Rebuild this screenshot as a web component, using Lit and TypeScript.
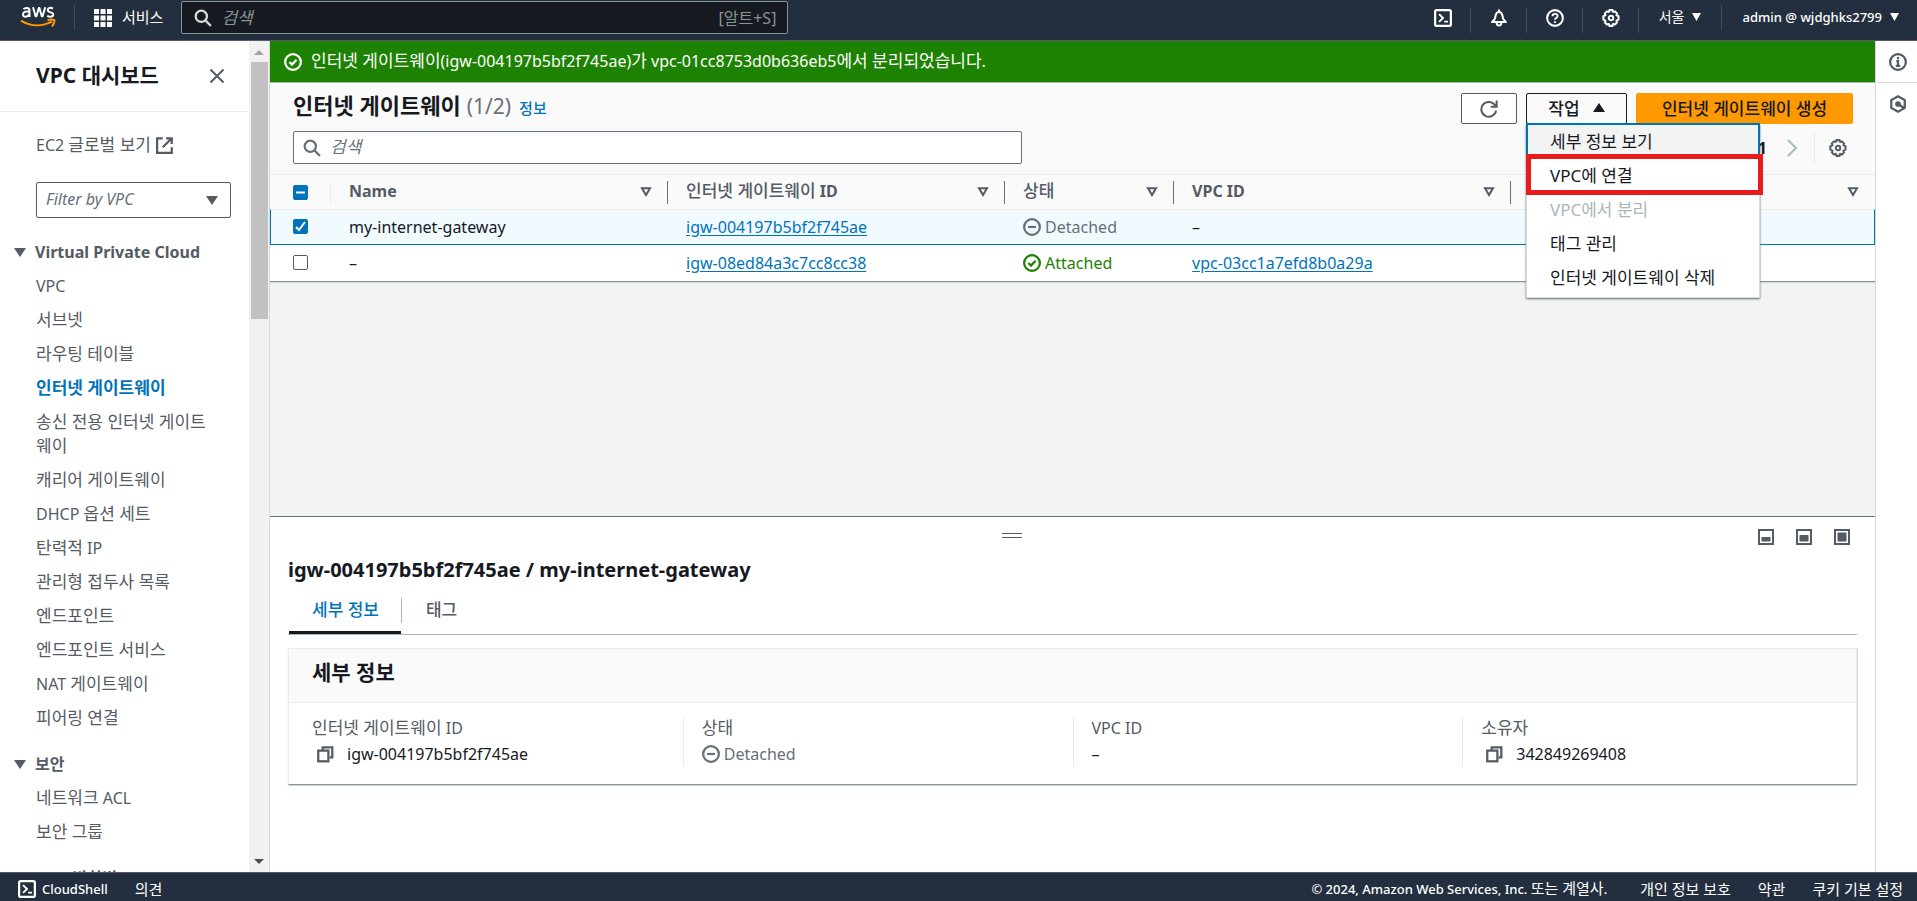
import { LitElement, html, svg, css } from "lit";
import { customElement, property } from "lit/decorators.js";
import { classMap } from "lit/directives/class-map.js";

const stroked = (body: unknown, size = 18) =>
  html`<svg width=${size} height=${size} viewBox="0 0 16 16" fill="none" stroke="currentColor" stroke-width="2" aria-hidden="true">${body}</svg>`;

// Wraps each run of Hangul so that it can be sized apart from Latin text.
const mixed = (text: string) =>
  text.split(/([가-힣]+(?: [가-힣]+)*)/).filter(Boolean).map((t) => (/[가-힣]/.test(t) ? html`<span class="ko">${t}</span>` : t));

const icons: Record<string, unknown> = {
  search: stroked(svg`<circle cx="6.5" cy="6.5" r="5"/><path d="M10.2 10.2 15 15"/>`),
  services: html`<svg width="18" height="18" viewBox="0 0 18 18" fill="currentColor" aria-hidden="true">
    <path d="M0 0h5v5H0zM6.500 0h5v5h-5zM13 0h5v5h-5zM0 6.500h5v5H0zM6.500 6.500h5v5h-5zM13 6.500h5v5h-5zM0 13h5v5H0zM6.500 13h5v5h-5zM13 13h5v5h-5z"/></svg>`,
  shell: stroked(svg`<rect x="1" y="1" width="14" height="14" rx="1.500"/><path d="m4.500 4.500 3.500 3.500-3.500 3.500M9 11.200h3.500" stroke-width="1.700"/>`),
  bell: stroked(svg`<path d="M8 .5V2.500M1.800 11.600h12.400l-2.500-2.800-.8-3.500C10.500 3.700 9.600 2.600 8 2.600S5.500 3.700 5.100 5.300l-.8 3.500z" stroke-linejoin="round" stroke-width="1.800"/><path d="M6 12.500c0 3 4 3 4 0" stroke-width="1.800"/>`),
  help: stroked(svg`<circle cx="8" cy="8" r="7" stroke-width="1.800"/><path d="M5.800 6.400C5.800 3.600 10.300 3.700 10.300 6.300 10.300 7.900 8 7.900 8 9.600M8 10.900v1.500" stroke-width="1.700"/>`),
  gear: stroked(svg`<path d="M6.600 1h2.800l.5 1.600 1.600-.5 1.900 1.900-.6 1.600 1.900.7v3.200l-1.900.8.6 1.600-1.900 1.900-1.600-.6L9.400 15H6.600l-.6-1.800-1.600.6-1.900-1.900.6-1.600-1.900-.8V6.300l1.900-.7-.6-1.600 1.900-1.900 1.600.5z" stroke-width="1.800" stroke-linejoin="round"/><circle cx="8" cy="8" r="2" stroke-width="1.800"/>`),
  close: stroked(svg`<path d="m1.500 1.500 13 13m0-13-13 13"/>`, 16),
  external: stroked(svg`<path d="M6 2H1v13h13v-5"/><path d="M9 2h5v5M14 2 6 10"/>`),
  check: stroked(svg`<circle cx="8" cy="8" r="7"/><path d="m4.800 8 2.300 2.300L11.200 6"/>`),
  minus: stroked(svg`<circle cx="8" cy="8" r="7"/><path d="M4.500 8h7"/>`),
  info: stroked(svg`<circle cx="8" cy="8" r="7"/><path d="M8 3.500v2M6.500 7.300H8v4M6 11.500h4"/>`),
  hex: stroked(svg`<path d="m8 1.200 6 3.300v7l-6 3.300-6-3.300v-7z"/><circle cx="8" cy="8" r="2" fill="currentColor" stroke-width="1"/><path d="m8 8 6 4"/>`),
  refresh: stroked(svg`<path d="M14.300 9.500A6.600 6.600 0 1 1 13 4.200l1.500 1.300M14.800 .500v5.500H9.500" stroke-width="1.800"/>`),
  copy: stroked(svg`<rect x="2" y="5" width="9" height="9.500"/><path d="M6 4.500V2h8.500v9H12"/>`),
  next: html`<svg width="12" height="18" viewBox="0 0 12 18" fill="none" stroke="currentColor" stroke-width="2" aria-hidden="true"><path d="m2 1 8 8-8 8"/></svg>`,
  filter: html`<svg width="12" height="10" viewBox="0 0 12 10" fill="none" stroke="currentColor" stroke-width="2" aria-hidden="true"><path d="M2 1.200h8L6 8z"/></svg>`,
  up: html`<svg width="12" height="9" viewBox="0 0 12 9" fill="currentColor" aria-hidden="true"><path d="M6 0l6 9H0z"/></svg>`,
  down: html`<svg width="12" height="9" viewBox="0 0 12 9" fill="currentColor" aria-hidden="true"><path d="M0 0h12L6 9z"/></svg>`,
  caret: html`<svg width="9" height="8" viewBox="0 0 9 8" fill="currentColor" aria-hidden="true"><path d="M0 0h9L4.500 8z"/></svg>`,
  grip: html`<svg width="20" height="6" viewBox="0 0 20 6" fill="currentColor" aria-hidden="true"><path d="M0 0h20v1H0zM0 4h20v1H0z"/></svg>`,
  panelSmall: html`<svg width="16" height="16" viewBox="0 0 16 16" aria-hidden="true"><path d="M1 1h14v14H1z" fill="none" stroke="currentColor" stroke-width="2"/><path d="M3.500 8h9v4.500h-9z" fill="currentColor"/></svg>`,
  panelMedium: html`<svg width="16" height="16" viewBox="0 0 16 16" aria-hidden="true"><path d="M1 1h14v14H1z" fill="none" stroke="currentColor" stroke-width="2"/><path d="M3.500 6h9v6.500h-9z" fill="currentColor"/></svg>`,
  panelLarge: html`<svg width="16" height="16" viewBox="0 0 16 16" aria-hidden="true"><path d="M1 1h14v14H1z" fill="none" stroke="currentColor" stroke-width="2"/><path d="M3.500 3.500h9v9h-9z" fill="currentColor"/></svg>`,
};

const base = css`
  * { box-sizing: border-box; }
  svg { display: block; flex: none; }
  a { color: inherit; text-decoration: none; }
  button, input, select { font: inherit; color: inherit; margin: 0; }
  button { background: none; border: 0; padding: 0; display: flex; align-items: center; cursor: pointer; white-space: nowrap; }
  h1, h2, h3, ul, dl, dd, dt { margin: 0; padding: 0; }
  ul { list-style: none; }
  .ko { font-size: 17px; line-height: 1; }
`;

@customElement("console-header")
export class ConsoleHeader extends LitElement {
  static styles = [base, css`
    :host { display: flex; height: 41px; background: #232f3e; border-bottom: 1px solid #545b64; color: #fff; font-size: 14px; line-height: 20px; padding-bottom: 5px; }
    .logo { padding: 5px 18px 0 21px; }
    .group { display: flex; align-items: center; }
    .rule { width: 1px; height: 25px; background: #414d5c; margin-top: 5px; flex: none; }
    .services { gap: 10px; padding: 0 18px 0 19px; font-size: 15px; }
    .services span { padding-bottom: 2px; }
    .search { display: flex; align-items: center; width: 607px; height: 33px; margin-top: 1px; padding: 0 11px 0 12px; background: #16191f; border: 1px solid #879596; border-radius: 2px; color: #d5dbdb; }
    .search input { flex: 1; min-width: 0; border: 0; outline: 0; background: none; padding: 0 0 0 9px; font-size: 17px; }
    .search input::placeholder { color: #879596; font-style: italic; opacity: 1; }
    .hint { color: #879596; font-size: 16px; }
    .spacer { flex: 1; }
    .tool { padding: 0 18px 0 19px; }
    .drop { gap: 8px; padding: 0 20px; height: 33px; }
    .account { gap: 8px; padding-right: 18px; font-size: 13px; font-weight: 500; }
  `];
  render() {
    return html`
      <a class="logo" href="#" aria-label="AWS">
        <svg width="35" height="24" viewBox="0 0 35 24" aria-hidden="true">
          <g fill="none" stroke="#fff" stroke-width="2">
            <path d="M2.500 4.200C4 2.500 8.500 2 8.500 5.500V12M8.500 6.700C4 5.800 2 7 2 9.500c0 3.200 5 3 6.500-.8"/>
            <path d="m12 2.200 2.600 9h.8L17.800 3h.6l2.400 8.200h.8l2.600-9" stroke-linejoin="round"/>
            <path d="M32 3.600C29.500 2.300 26.800 2.500 26.800 5c0 3 5.400 1.700 5.400 4.500 0 2.800-4.200 2.700-6 1.300"/>
          </g>
          <path d="M0 15.500c9.500 6 21 6.200 31 1.200M26.500 15.300c3-1 5.500-1 6.800-.3.300 1.700-.3 4.200-2.300 6.500" fill="none" stroke="#ff9900" stroke-width="2"/>
        </svg>
      </a>
      <span class="rule"></span>
      <button class="services">${icons.services}<span>서비스</span></button>
      <label class="search">${icons.search}<input type="search" placeholder="검색" aria-label="검색" /><span class="hint">[알트+S]</span></label>
      <span class="spacer"></span>
      <nav class="group">
        <button class="tool" aria-label="CloudShell">${icons.shell}</button><span class="rule"></span>
        <button class="tool" aria-label="알림">${icons.bell}</button><span class="rule"></span>
        <button class="tool" aria-label="도움말">${icons.help}</button><span class="rule"></span>
        <button class="tool" aria-label="설정">${icons.gear}</button><span class="rule"></span>
      </nav>
      <button class="drop"><span>서울</span>${icons.caret}</button><span class="rule"></span>
      <button class="drop account"><span>admin @ wjdghks2799</span>${icons.caret}</button>
    `;
  }
}

@customElement("side-nav")
export class SideNav extends LitElement {
  static styles = [base, css`
    :host { display: flex; width: 270px; flex: none; min-height: 0; border-right: 1px solid #d5dbdb; background: #fff; color: #545b64; font-size: 16px; line-height: 24px; }
    .content { flex: 1; min-width: 0; overflow: hidden; }
    .title { display: flex; align-items: center; justify-content: space-between; height: 71px; padding: 0 24px 0 36px; border-bottom: 1px solid #eaeded; }
    h2 { font-size: 21px; font-weight: 700; color: #16191f; line-height: 28px; padding-bottom: 2px; }
    .external { display: flex; align-items: center; gap: 5px; padding: 21px 0 0 36px; }
    .filter { position: relative; display: block; margin: 25px 18px 0 36px; }
    .filter select { appearance: none; width: 100%; height: 36px; padding: 0 9px 2px; border: 1px solid #545b64; border-radius: 2px; background: #fff; font-size: 16px; font-style: italic; color: #687078; }
    .filter svg { position: absolute; right: 13px; top: 14px; pointer-events: none; }
    .head { display: flex; align-items: center; gap: 9px; padding-left: 14px; height: 24px; margin-top: 22px; }
    h3 { font-size: 16px; font-weight: 700; line-height: 24px; }
    ul { padding: 10px 36px 0; display: flex; flex-direction: column; gap: 10px; margin-bottom: 22px; }
    li { line-height: 24px; word-break: break-all; }
    .current { color: #0073bb; font-weight: 700; }
    .bar { width: 20px; background: #f1f1f1; display: flex; flex-direction: column; align-items: center; padding: 9px 0 8px; }
    .bar .top { color: #a3a3a3; }
    .bar .bottom { color: #505050; margin-top: auto; }
    .thumb { width: 17px; height: 257px; background: #c1c1c1; margin-top: 7px; }
  `];
  static sections = [
    { title: "Virtual Private Cloud", items: ["VPC", "서브넷", "라우팅 테이블", "인터넷 게이트웨이", "송신 전용 인터넷 게이트웨이", "캐리어 게이트웨이", "DHCP 옵션 세트", "탄력적 IP", "관리형 접두사 목록", "엔드포인트", "엔드포인트 서비스", "NAT 게이트웨이", "피어링 연결"] },
    { title: "보안", items: ["네트워크 ACL", "보안 그룹"] },
    { title: "DNS 방화벽", items: [] as string[] },
  ];
  render() {
    return html`
      <div class="content">
        <div class="title"><h2>VPC 대시보드</h2><button aria-label="닫기">${icons.close}</button></div>
        <a class="external" href="#"><span>${mixed("EC2 글로벌 보기")}</span>${icons.external}</a>
        <label class="filter"><select aria-label="Filter by VPC"><option>Filter by VPC</option></select>${icons.down}</label>
        ${SideNav.sections.map((s) => html`
          <div class="head">${icons.down}<h3>${s.title}</h3></div>
          <ul>${s.items.map((i) => html`<li><a href="#" class=${classMap({ current: i === "인터넷 게이트웨이" })}>${mixed(i)}</a></li>`)}</ul>`)}
      </div>
      <div class="bar" aria-hidden="true">
        <svg class="top" width="10" height="5" viewBox="0 0 10 5" fill="currentColor"><path d="M5 0l5 5H0z"/></svg>
        <div class="thumb"></div>
        <svg class="bottom" width="10" height="5" viewBox="0 0 10 5" fill="currentColor"><path d="M0 0h10L5 5z"/></svg>
      </div>
    `;
  }
}

@customElement("status-label")
export class StatusLabel extends LitElement {
  @property() status = "";
  static styles = [base, css`
    :host { display: block; }
    .status { display: flex; align-items: center; gap: 4px; color: #687078; }
    .ok { color: #1d8102; }
  `];
  render() {
    const ok = this.status === "Attached";
    return html`<span class=${classMap({ status: true, ok })}>${ok ? icons.check : icons.minus}<span>${this.status}</span></span>`;
  }
}

@customElement("gateway-table")
export class GatewayTable extends LitElement {
  static styles = [base, css`
    :host { display: block; background: #fafafa; border-top: 1px solid #aab7b8; border-bottom: 1px solid #879596; box-shadow: 0 1px 1px #d5dbdb; }
    .top { display: flex; justify-content: space-between; padding: 10px 22px 7px 23px; }
    .title { display: flex; align-items: baseline; gap: 6px; line-height: 24px; }
    h1 { font-size: 22px; font-weight: 700; line-height: 24px; }
    .count { font-size: 21px; color: #687078; }
    .info { font-size: 15px; font-weight: 500; color: #0073bb; margin-left: 2px; }
    .actions { display: flex; gap: 9px; }
    .btn { height: 31px; border: 1px solid #545b64; border-radius: 2px; background: #fff; color: #16191f; font-size: 17px; font-weight: 500; padding: 0 0 2px; justify-content: center; }
    .refresh { width: 56px; padding: 0; color: #545b64; }
    .open { width: 101px; gap: 13px; border-color: #16191f; background: #fafafa; }
    .primary { width: 217px; background: #ff9900; border-color: #ff9900; }
    .menu-wrap { position: relative; }
    .menu { position: absolute; z-index: 2; top: 31px; left: 0; width: 234px; padding-bottom: 3px; background: #fff; border: 1px solid #d5dbdb; border-top: 0; box-shadow: 0 1px 2px #687078; }
    .menu button { width: 100%; height: 34px; padding: 0 23px 1px; font-size: 17px; color: #16191f; }
    .menu .focused { background: #f2f3f3; box-shadow: 0 0 0 1px #0073bb, inset 0 0 0 1px #0073bb; }
    .menu button:disabled { color: #aab7b8; }
    .mark { position: absolute; top: 30px; left: -1px; width: 237px; height: 41px; border: 5px solid #e81c1c; pointer-events: none; }
    .tools { display: flex; justify-content: space-between; align-items: center; padding: 0 28px 10px 23px; }
    .search { display: flex; align-items: center; width: 729px; height: 33px; padding: 0 9px; border: 1px solid #687078; border-radius: 2px; background: #fff; color: #687078; }
    .search input { flex: 1; min-width: 0; border: 0; outline: 0; background: none; padding: 0 0 2px 9px; font-size: 17px; }
    .search input::placeholder { color: #687078; font-style: italic; opacity: 1; }
    .pages { display: flex; align-items: center; color: #545b64; }
    .page { font-weight: 700; font-size: 16px; margin-right: 19px; color: #16191f; }
    .pages .next { color: #aab7b8; }
    .rule { width: 1px; height: 32px; background: #eaeded; margin: 0 14px 0 16px; }
    table { width: 100%; border-collapse: separate; border-spacing: 0; table-layout: fixed; font-size: 16px; line-height: 22px; border-top: 1px solid #eaeded; }
    .c-check { width: 61px; }
    .c-wide { width: 21%; }
    .c-state { width: 169px; }
    th, td { padding: 0 0 1px 18px; text-align: left; height: 36px; font-weight: 400; }
    th { height: 34px; color: #545b64; font-weight: 700; padding-bottom: 0; }
    th .ko { font-weight: 500; }
    th:first-child, td:first-child { padding-left: 23px; }
    .cell { display: flex; align-items: center; justify-content: space-between; height: 23px; padding-right: 15px; border-right: 1px solid #687078; }
    .cell > span { padding-bottom: 2px; }
    .cell.light { border-color: #eaeded; padding: 0; }
    .cell.last { border: 0; padding-right: 16px; }
    td { background: #fff; border-top: 1px solid #eaeded; color: #16191f; }
    .on td { background: #f1faff; border-bottom: 1px solid #0073bb; }
    .on td:first-child { border-left: 1px solid #0073bb; padding-left: 22px; }
    .on td:last-child { border-right: 1px solid #0073bb; }
    .on + tr td { border-top: 0; }
    td a { color: #0073bb; text-decoration: underline; text-underline-offset: 2px; }
    input[type="checkbox"] { appearance: none; display: block; width: 15px; height: 15px; border: 1px solid #545b64; border-radius: 2px; background: #fff center / 13px no-repeat; }
    input[type="checkbox"]:checked, input[type="checkbox"].mixed { background-color: #0073bb; border-color: #0073bb; }
    input[type="checkbox"]:checked { background-image: url("data:image/svg+xml,%3Csvg xmlns='http://www.w3.org/2000/svg' viewBox='0 0 13 13'%3E%3Cpath d='M2 7l3 3 6-8' fill='none' stroke='white' stroke-width='2'/%3E%3C/svg%3E"); }
    input[type="checkbox"].mixed { background-image: url("data:image/svg+xml,%3Csvg xmlns='http://www.w3.org/2000/svg' viewBox='0 0 13 13'%3E%3Cpath d='M2 6.500h9' stroke='white' stroke-width='2'/%3E%3C/svg%3E"); }
  `];
  static rows = [
    { name: "my-internet-gateway", id: "igw-004197b5bf2f745ae", status: "Detached", vpc: "", on: true },
    { name: "–", id: "igw-08ed84a3c7cc8cc38", status: "Attached", vpc: "vpc-03cc1a7efd8b0a29a", on: false },
  ];
  render() {
    const head = ["Name", "인터넷 게이트웨이 ID", "상태", "VPC ID"];
    return html`
      <div class="top">
        <div class="title"><h1>인터넷 게이트웨이</h1><span class="count">(1/2)</span><a class="info" href="#">정보</a></div>
        <div class="actions">
          <button class="btn refresh" aria-label="새로 고침">${icons.refresh}</button>
          <div class="menu-wrap">
            <button class="btn open" aria-expanded="true"><span>작업</span>${icons.up}</button>
            <div class="menu">
              <button class="focused">세부 정보 보기</button>
              <button>VPC에 연결</button>
              <button disabled>VPC에서 분리</button>
              <button>태그 관리</button>
              <button>인터넷 게이트웨이 삭제</button>
              <div class="mark"></div>
            </div>
          </div>
          <button class="btn primary">인터넷 게이트웨이 생성</button>
        </div>
      </div>
      <div class="tools">
        <label class="search">${icons.search}<input type="search" placeholder="검색" aria-label="게이트웨이 검색" /></label>
        <div class="pages"><span class="page">1</span><button class="next" aria-label="다음">${icons.next}</button><span class="rule"></span><button aria-label="기본 설정">${icons.gear}</button></div>
      </div>
      <table>
        <colgroup><col class="c-check" /><col class="c-wide" /><col class="c-wide" /><col class="c-state" /><col class="c-wide" /><col /></colgroup>
        <thead><tr>
          <th><div class="cell light"><input type="checkbox" class="mixed" aria-label="모두 선택" /></div></th>
          ${head.map((h) => html`<th><div class="cell"><span>${mixed(h)}</span>${icons.filter}</div></th>`)}
          <th><div class="cell last"><span></span>${icons.filter}</div></th>
        </tr></thead>
        <tbody>${GatewayTable.rows.map((r) => html`
          <tr class=${classMap({ on: r.on })}>
            <td><input type="checkbox" .checked=${r.on} aria-label=${r.id} /></td>
            <td>${r.name}</td>
            <td><a href="#">${r.id}</a></td>
            <td><status-label status=${r.status}></status-label></td>
            <td>${r.vpc ? html`<a href="#">${r.vpc}</a>` : "–"}</td>
            <td></td>
          </tr>`)}
        </tbody>
      </table>
    `;
  }
}

@customElement("detail-panel")
export class DetailPanel extends LitElement {
  static styles = [base, css`
    :host { display: block; flex: none; height: 356px; background: #fff; border-top: 1px solid #687078; padding: 12px 18px 0; color: #16191f; }
    .top { display: flex; color: #545b64; height: 16px; }
    .grip { flex: 1; justify-content: center; padding: 4px 0 0; align-items: flex-start; cursor: row-resize; }
    .sizes { display: flex; gap: 22px; padding: 0 7px 0 23px; }
    h2 { font-size: 20px; font-weight: 700; line-height: 28px; margin: 11px 0 14px; }
    .tabs { display: flex; border-bottom: 1px solid #aab7b8; height: 37px; }
    .tab { align-items: flex-start; font-size: 17px; line-height: 24px; font-weight: 500; color: #545b64; padding: 0 24px; }
    .tab.active { color: #0073bb; border-bottom: 3px solid #16191f; padding: 0 22px 0 23px; margin-left: 1px; }
    .divider { width: 1px; height: 25px; background: #aab7b8; }
    .card { margin-top: 13px; border: 1px solid #eaeded; border-bottom-color: #879596; box-shadow: 0 1px 1px #d5dbdb, 1px 0 #d5dbdb; }
    h3 { font-size: 21px; font-weight: 700; line-height: 28px; padding: 9px 23px 16px; background: #fafafa; border-bottom: 1px solid #eaeded; }
    dl { display: grid; grid-template-columns: repeat(4, 1fr); padding: 14px 4px 18px; font-size: 16px; line-height: 24px; }
    .field { border-left: 1px solid #eaeded; padding-left: 18px; height: 49px; }
    .field:first-child { border-color: transparent; }
    dt { color: #545b64; height: 24px; line-height: 22px; }
    dd { display: flex; align-items: center; gap: 13px; height: 25px; }
    .copy { color: #545b64; padding-left: 4px; }
  `];
  render() {
    const copy = html`<button class="copy" aria-label="복사">${icons.copy}</button>`;
    return html`
      <div class="top">
        <button class="grip" aria-label="패널 크기 조정">${icons.grip}</button>
        <div class="sizes">
          <button aria-label="작게">${icons.panelSmall}</button>
          <button aria-label="중간">${icons.panelMedium}</button>
          <button aria-label="크게">${icons.panelLarge}</button>
        </div>
      </div>
      <h2>igw-004197b5bf2f745ae / my-internet-gateway</h2>
      <div class="tabs" role="tablist">
        <button class="tab active" role="tab" aria-selected="true">세부 정보</button>
        <span class="divider"></span>
        <button class="tab" role="tab">태그</button>
      </div>
      <section class="card">
        <h3>세부 정보</h3>
        <dl>
          <div class="field"><dt>${mixed("인터넷 게이트웨이 ID")}</dt><dd>${copy}<span>igw-004197b5bf2f745ae</span></dd></div>
          <div class="field"><dt>${mixed("상태")}</dt><dd><status-label status="Detached"></status-label></dd></div>
          <div class="field"><dt>VPC ID</dt><dd>–</dd></div>
          <div class="field"><dt>${mixed("소유자")}</dt><dd>${copy}<span>342849269408</span></dd></div>
        </dl>
      </section>
    `;
  }
}

@customElement("app-root")
export class AppRoot extends LitElement {
  static styles = [base, css`
    :host { display: flex; flex-direction: column; height: 100vh; overflow: hidden; font-family: "Noto Sans", "Noto Sans CJK KR", sans-serif; font-size: 16px; color: #16191f; background: #fff; }
    console-header { flex: none; }
    .body { display: flex; flex: 1; min-height: 0; }
    main { flex: 1; min-width: 0; display: flex; flex-direction: column; background: #f2f3f3; }
    .flash { display: flex; align-items: center; gap: 9px; height: 41px; flex: none; padding: 0 14px; background: #1d8102; color: #fff; font-size: 16px; }
    .flash span { padding-bottom: 1px; }
    gateway-table { position: relative; z-index: 1; }
    .space { flex: 1; }
    .rail { width: 42px; flex: none; border-left: 1px solid #d5dbdb; color: #545b64; }
    .rail button { width: 100%; height: 42px; justify-content: center; padding-left: 3px; }
    .rail button:first-child { border-bottom: 1px solid #d5dbdb; }
    footer { flex: none; display: flex; align-items: center; height: 29px; padding: 3px 14px 0 18px; background: #232f3e; border-top: 1px solid #545b64; color: #fff; font-size: 15px; line-height: 20px; gap: 27px; }
    .shell { gap: 6px; font-size: 13px; font-weight: 500; }
    .copyright { margin-left: auto; margin-right: 6px; font-size: 13px; font-weight: 500; }
    .copyright .ko { font-size: 15px; font-weight: 400; }
  `];
  render() {
    return html`
      <console-header></console-header>
      <div class="body">
        <side-nav></side-nav>
        <main>
          <div class="flash" role="status">${icons.check}<span>${mixed("인터넷 게이트웨이(igw-004197b5bf2f745ae)가 vpc-01cc8753d0b636eb5에서 분리되었습니다.")}</span></div>
          <gateway-table></gateway-table>
          <div class="space"></div>
          <detail-panel></detail-panel>
        </main>
        <aside class="rail">
          <button aria-label="정보">${icons.info}</button>
          <button aria-label="진단">${icons.hex}</button>
        </aside>
      </div>
      <footer>
        <button class="shell">${icons.shell}<span>CloudShell</span></button>
        <a href="#">의견</a>
        <span class="copyright">${mixed("© 2024, Amazon Web Services, Inc. 또는 계열사.")}</span>
        <a href="#">개인 정보 보호</a>
        <a href="#">약관</a>
        <a href="#">쿠키 기본 설정</a>
      </footer>
    `;
  }
}
